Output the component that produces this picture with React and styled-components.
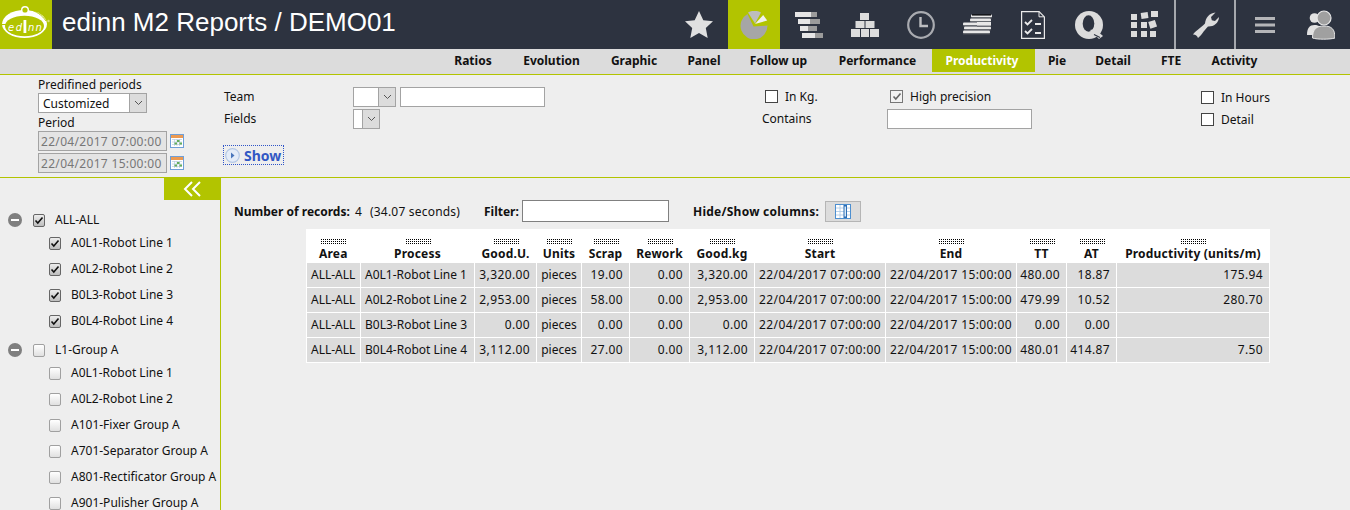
import React from 'react';
import styled, { createGlobalStyle } from 'styled-components';

const Global = createGlobalStyle`
  html, body { margin: 0; height: 100%; overflow: hidden; background: #eeeeee; }
  body { font-family: "Noto Sans", "DejaVu Sans", sans-serif; font-size: 12px; color: #111; }
  #root { height: 510px; }
  * { box-sizing: border-box; }
`;

const Page = styled.div`display: flex; flex-direction: column; height: 510px; overflow: hidden;`;
const Header = styled.header`display: flex; align-items: stretch; height: 49px; background: #2d3340; flex: none;`;
const LogoBox = styled.div`width: 52px; background: #b2c400; flex: none;`;
const Title = styled.h1`margin: 0 0 0 10px; font: 400 26px/45px "Liberation Sans", Arial, sans-serif; color: #fff; flex: 1; white-space: nowrap;`;
const IconBar = styled.div`display: flex; align-items: center; flex: none; padding-right: 15px;`;
const IconCell = styled.div`
  display: flex; align-items: center; justify-content: center; height: 49px; flex: none;
  width: ${p => p.$w}px; margin-left: ${p => p.$gap || 0}px;
  background: ${p => p.$active ? '#b2c400' : 'transparent'};
`;
const Sep = styled.div`width: 2px; height: 49px; background: #a5a8ad; flex: none; margin-left: ${p => p.$gap}px;`;

const Nav = styled.nav`display: flex; padding-left: 437px; height: 26px; background: #dcdcdc; border-bottom: 1px solid #b2c400; flex: none;`;
const NavItem = styled.a`
  display: flex; align-items: center; justify-content: center; height: 23px; width: ${p => p.$w}px; flex: none;
  font-weight: 700; font-size: 12px; color: ${p => p.$active ? '#fff' : '#111'};
  background: ${p => p.$active ? '#b2c400' : 'transparent'};
  padding-right: ${p => p.$active ? 3 : 0}px;
`;

const FilterPanel = styled.section`display: flex; height: 103px; border-bottom: 1px solid #b2c400; flex: none;`;
const PeriodCol = styled.div`width: 186px; margin-left: 38px; padding-top: 2px; flex: none;`;
const FieldLabel = styled.div`height: ${p => p.$h || 16}px; line-height: 15px; margin-top: ${p => p.$mt || 0}px; white-space: nowrap;`;
const Select = styled.div`
  display: flex; justify-content: flex-end; align-items: stretch; background: #fff; border: 1px solid #a3a3a3;
  width: ${p => p.$w}px; height: ${p => p.$h || 20}px; padding-left: 4px; line-height: 19px;
`;
const SelectText = styled.span`flex: 1;`;
const SelectArrow = styled.span`display: flex; align-items: center; justify-content: center; width: 17px; background: #dcdcdc; border-left: 1px solid #a3a3a3;`;
const DateRow = styled.div`display: flex; align-items: center; gap: 3px; height: 21px; margin-top: ${p => p.$mt || 0}px;`;
const DateInput = styled.div`width: 129px; height: 20px; line-height: 19px; padding-left: 2px; letter-spacing: .32px; background: #e4e4e4; border: 1px solid #a3a3a3; color: #777; white-space: nowrap; overflow: hidden;`;
const TeamCol = styled.div`width: 541px; flex: none; padding-top: 11px;`;
const FormRow = styled.div`display: flex; align-items: center; height: 22px; margin-left: ${p => p.$ml || 0}px;`;
const RowLabel = styled.span`width: ${p => p.$w}px; flex: none; padding-bottom: 2px;`;
const TextInput = styled.div`width: ${p => p.$w}px; height: 20px; margin-left: ${p => p.$ml || 0}px; background: #fff; border: 1px solid #a3a3a3; flex: none;`;
const ShowLink = styled.a`
  display: inline-flex; align-items: center; gap: 4px; margin-top: 15px; height: 20px; width: 61px; padding-left: 1px; margin-left: -1px;
  border: 1px dotted #2f55c8; color: #3358c4; font-weight: 700; font-size: 14px; white-space: nowrap;
`;
const OptionsCol = styled.div`width: 436px; flex: none; padding-top: 11px;`;
const Check = styled.span`
  display: inline-flex; align-items: center; justify-content: center; width: 13px; height: 13px; flex: none;
  background: ${p => p.$soft ? '#f2f2f2' : '#fff'}; border: 1px solid ${p => p.$soft ? '#777' : '#444'};
  margin-right: 7px;
`;
const OptionGroup = styled.div`display: flex; align-items: center; width: ${p => p.$w}px; flex: none; padding-bottom: 2px;`;
const HoursCol = styled.div`padding-top: 11px; flex: none;`;
const HoursRow = styled.div`display: flex; align-items: center; height: 22px;`;

const Body = styled.div`display: flex; flex: 1; min-height: 0;`;
const Sidebar = styled.aside`width: 221px; border-right: 1px solid #b2c400; flex: none; overflow: hidden;`;
const Collapse = styled.div`display: flex; align-items: center; justify-content: center; width: 56px; height: 22px; margin-left: 164px; background: #b2c400;`;
const Tree = styled.div`padding-top: 8px;`;
const GroupRow = styled.div`display: flex; align-items: center; height: 22px; padding: 2px 0 0 8px; margin-top: ${p => p.$mt || 0}px;`;
const ChildRow = styled.div`display: flex; align-items: center; height: 26px; padding-left: 49px;`;
const Minus = styled.span`display: flex; align-items: center; justify-content: center; width: 14px; height: 14px; border-radius: 50%; background: #7f7f7f; margin-right: 11px; flex: none;
  &::before { content: ''; width: 8px; height: 2px; background: #fff; }`;
const TreeCheck = styled.span`
  display: inline-flex; align-items: center; justify-content: center; width: 12px; height: 13px; flex: none; margin-right: 10px;
  border: 1px solid ${p => p.$on ? '#666' : '#a0a0a0'}; border-radius: 2px;
  background: ${p => p.$on ? 'linear-gradient(#ededed,#bdbdbd)' : 'linear-gradient(#fff,#e0e0e0)'};
`;
const TreeText = styled.span`white-space: nowrap; line-height: 14px;`;

const Main = styled.main`flex: 1; min-width: 0;`;
const Toolbar = styled.div`display: flex; align-items: center; height: 51px; padding: 15px 0 0 13px;`;
const Strong = styled.span`font-weight: 700; white-space: nowrap; width: ${p => p.$w}px; flex: none; letter-spacing: ${p => p.$ls || 0}px;`;
const Plain = styled.span`white-space: nowrap; width: ${p => p.$w}px; flex: none; letter-spacing: ${p => p.$ls || 0}px;`;
const FilterInput = styled.div`width: 147px; height: 22px; margin: 0 24px 0 4px; background: #fff; border: 1px solid #808080; flex: none;`;
const ColumnsButton = styled.div`display: flex; align-items: center; justify-content: center; width: 36px; height: 21px; margin-left: 5px; background: #dcdcdc; border: 1px solid #b5b5b5;`;

const Table = styled.table`border-collapse: collapse; table-layout: fixed; width: 963px; margin-left: 85px; background: #fff;`;
const Th = styled.th`
  height: 33px; padding: 10px 0 0; font-weight: 700; font-size: 12px; letter-spacing: .2px; text-align: center; vertical-align: top; line-height: 15px; white-space: nowrap;
  border-right: 1px solid #fff;
`;
const Grip = styled.div`
  width: 26px; height: 5px; margin: 0 auto 2px;
  background-image: conic-gradient(#000 25%, transparent 0);
  background-size: 2px 2px;
`;
const Td = styled.td`
  height: 25px; background: #dcdcdc; border: 1px solid #fff; white-space: nowrap; overflow: hidden;
  text-align: ${p => p.$align};
  padding: ${p => p.$align === 'center' ? '0' : p.$align === 'right' ? '0 6px 0 0' : '0 0 0 4px'};
  letter-spacing: ${p => p.$num ? '.38px' : '0'};
`;

const Chevron = () => (
  <svg width="9" height="6" viewBox="0 0 9 6"><path d="M1 1l3.5 3.5L8 1" fill="none" stroke="#555" strokeWidth="1" /></svg>
);
const Logo = () => (
  <svg width="52" height="49" viewBox="0 0 52 49">
    <ellipse cx="24.500" cy="24" rx="22.500" ry="14" fill="#fff" />
    <ellipse cx="24.500" cy="26" rx="19.500" ry="10.300" fill="#b2c400" />
    <path d="M29 9.500C36 11 42 15 46 21" fill="none" stroke="#b2c400" strokeWidth=".9" />
    <path d="M0 24.500h7" stroke="#b2c400" strokeWidth="1" />
    <circle cx="25" cy="10" r="3.300" fill="#b2c400" stroke="#fff" strokeWidth="1.400" />
    <text x="8" y="31" fontFamily="DejaVu Sans" fontStyle="italic" fontSize="10" letterSpacing="1.500" fill="#fff">ed</text>
    <rect x="23.500" y="20" width="2.800" height="13" fill="#fff" />
    <text x="28" y="31" fontFamily="DejaVu Sans" fontStyle="italic" fontSize="10" letterSpacing="1.200" fill="#fff">nn</text>
    <circle cx="48.500" cy="21" r="1.200" fill="#d7e07a" />
  </svg>
);
const Star = () => (
  <svg width="28" height="27" viewBox="0 0 28 27"><path d="M14 0l4.300 9.200L28 10.300l-7.200 6.800L22.700 27 14 22l-8.700 5 1.900-9.900L0 10.300l9.700-1.100z" fill="#e0e0e0" /></svg>
);
const Pie = () => (
  <svg width="28" height="28" viewBox="0 0 28 28">
    <path d="M7.500 3A13.500 13.500 0 1 0 27.500 14.500L13.500 15.500z" fill="#a6a6a6" />
    <path d="M8 1.500A14 14 0 0 1 21 1.500L15 12.500z" fill="#bdbdbd" />
    <path d="M15 13l8.200-9 4 5.600z" fill="#f1f1f1" />
  </svg>
);
const Gantt = () => (
  <svg width="28" height="26" viewBox="0 0 28 26">
    <rect x="0" y="0" width="16" height="5" fill="#e6e6e6" /><rect x="16" y="0" width="6" height="5" fill="#9b9b9b" />
    <rect x="3" y="7" width="12" height="5" fill="#e6e6e6" /><rect x="15" y="7" width="10" height="5" fill="#9b9b9b" />
    <rect x="5" y="14" width="8" height="5" fill="#e6e6e6" /><rect x="13" y="14" width="9" height="5" fill="#9b9b9b" />
    <rect x="7" y="21" width="13" height="5" fill="#e6e6e6" /><rect x="20" y="21" width="8" height="5" fill="#9b9b9b" />
  </svg>
);
const Bricks = () => (
  <svg width="28" height="24" viewBox="0 0 28 24" fill="#dcdcdc">
    <rect x="9" y="0" width="9" height="7" /><rect x="4.500" y="8" width="9" height="7" /><rect x="14.500" y="8" width="9" height="7" />
    <rect x="0" y="16" width="9" height="8" /><rect x="10" y="16" width="8" height="8" /><rect x="19" y="16" width="9" height="8" />
  </svg>
);
const Clock = () => (
  <svg width="28" height="28" viewBox="0 0 28 28"><circle cx="14" cy="14" r="12.800" fill="none" stroke="#a9abb0" strokeWidth="2.200" /><path d="M13.500 6v9H21" fill="none" stroke="#bcbdc0" strokeWidth="2.400" /></svg>
);
const Coins = () => (
  <svg width="29" height="21" viewBox="0 0 29 21">
    {[[8, 0], [7, 4], [0, 8], [1, 12], [0, 16]].map(([x, y], i) => (
      <g key={i}><rect x={x} y={y + 0.5} width={i < 2 ? 21 : 27} height="3" rx="1" fill="#e8e8e8" /><rect x={x} y={y + 3.4} width={i < 2 ? 21 : 27} height="1" fill="#55585f" /></g>
    ))}
    <rect x="9" y="0" width="19" height="1.600" fill="#15171c" />
    <rect x="14" y="8" width="14" height="4" fill="#e8e8e8" /><rect x="14" y="11.600" width="14" height="1" fill="#55585f" />
  </svg>
);
const Checklist = () => (
  <svg width="24" height="28" viewBox="0 0 24 28" fill="none" stroke="#eaeaea">
    <path d="M.6.6h17.500l5.300 5.300v21.500H.6z" strokeWidth="1.200" /><path d="M18 .8v5h5" strokeWidth="1" />
    <path d="M4 11l2.500 2.500L11 9M4 20l2.500 2.500L11 18" strokeWidth="1.800" /><path d="M14 13h6M14 22h6" strokeWidth="1.800" />
  </svg>
);
const QIcon = () => (
  <svg width="28" height="28" viewBox="0 0 28 28">
    <circle cx="14" cy="14" r="14" fill="#dcdcdc" />
    <ellipse cx="13.500" cy="12.500" rx="5.800" ry="8.300" fill="#2d3340" />
    <path d="M15 19l5-1 8 7-4 3z" fill="#dcdcdc" />
    <path d="M19 23.500l6 3" stroke="#2d3340" strokeWidth="1.200" />
  </svg>
);
const GridIcon = () => (
  <svg width="27" height="27" viewBox="0 0 27 27" fill="#dcdcdc">
    <rect x="0" y="3" width="6" height="6" /><rect x="10" y="1.500" width="7" height="6" transform="rotate(-8 13 4)" /><rect x="20" y="0" width="7" height="6" />
    <rect x="0" y="11" width="6" height="6" /><rect x="10" y="11" width="6" height="6" /><rect x="18" y="10" width="7" height="7" transform="rotate(-18 21 13)" />
    <rect x="0" y="20" width="6" height="6" /><rect x="10" y="20" width="6" height="6" /><rect x="19" y="20" width="6" height="6" />
  </svg>
);
const Wrench = () => (
  <svg width="27" height="26" viewBox="0 0 27 26">
    <path d="M1 22.500C2.500 20 8.500 16 13 11.500 13.500 6 17 1 23.500 .5L19 5l.8 3.200 3.200.8L27 5c-.2 6.500-5.800 9.800-11 9.500C11.500 19 9 24 6 26 5 24 4 22.500 1 22.500z" fill="#dcdcdc" />
  </svg>
);
const MenuIcon = () => (
  <svg width="20" height="16" viewBox="0 0 20 16" fill="#b4b5b8"><rect width="20" height="3" /><rect y="6.500" width="20" height="3" /><rect y="13" width="20" height="3" /></svg>
);
const Users = () => (
  <svg width="28" height="30" viewBox="0 0 28 30">
    <circle cx="7.500" cy="8" r="4.800" fill="#e2e2e2" /><path d="M0 25c0-7 2.500-10 7.500-10s7 2 7 10z" fill="#e2e2e2" />
    <circle cx="17" cy="8" r="7" fill="#a0a0a0" stroke="#e8e8e8" strokeWidth="1.200" />
    <path d="M5.500 28c0-9 4-12 11.500-12s11 3 11 12c-5 1.600-18 1.600-22.500 0z" fill="#a0a0a0" stroke="#e8e8e8" strokeWidth="1" />
  </svg>
);
const Calendar = () => (
  <svg width="14" height="14" viewBox="0 0 14 14">
    <rect x=".5" y=".5" width="13" height="13" fill="#fff" stroke="#6f9fd8" />
    <rect x="1" y="1" width="12" height="3" fill="#ec9a52" />
    <path d="M2 5.500h10M2 8h10M2 10.500h10M4.500 5v7M7 5v7M9.500 5v7" stroke="#b9cbe0" strokeWidth=".7" />
    <rect x="7" y="6" width="2.500" height="2" fill="#62ad5a" /><rect x="4.500" y="8.500" width="2.500" height="2" fill="#62ad5a" /><rect x="9.500" y="8.500" width="2.500" height="2" fill="#62ad5a" />
  </svg>
);
const ShowIcon = () => (
  <svg width="15" height="15" viewBox="0 0 15 15">
    <circle cx="7.500" cy="7.500" r="6.800" fill="#e4ecf8" stroke="#b4c8e6" strokeWidth="1.200" />
    <path d="M6 4.500l3.500 3L6 10.500z" fill="#4a76bb" />
  </svg>
);
const Tick = ({ color = '#111' }) => (
  <svg width="10" height="9" viewBox="0 0 10 9"><path d="M1.500 4.500l2.300 2.500L8.500 1.500" fill="none" stroke={color} strokeWidth="1.600" /></svg>
);
const DoubleChevron = () => (
  <svg width="18" height="16" viewBox="0 0 18 16" fill="none" stroke="#fff" strokeWidth="2"><path d="M9 1L2 8l7 7M17 1l-7 7 7 7" /></svg>
);
const ColumnsIcon = () => (
  <svg width="16" height="15" viewBox="0 0 16 15">
    <rect x=".5" y=".5" width="15" height="14" fill="#fff" stroke="#4d8fd0" />
    <path d="M1 4h14M1 7.500h14M1 11h14M5 1v13" stroke="#a7c6e6" strokeWidth=".8" />
    <rect x="8.500" y="1" width="3.500" height="13" fill="#2d6eb5" /><rect x="9.500" y="2.500" width="1.500" height="10" fill="#d8e8f6" />
  </svg>
);

const headIcons = [
  { C: Star, gap: 0, w: 28 },
  { C: Pie, gap: 15, w: 52, active: true },
  { C: Gantt, gap: 15, w: 28 },
  { C: Bricks, gap: 28, w: 28 },
  { C: Clock, gap: 28, w: 28 },
  { C: Coins, gap: 28, w: 29 },
  { C: Checklist, gap: 29, w: 24 },
  { C: QIcon, gap: 30, w: 28 },
  { C: GridIcon, gap: 28, w: 27 },
];
const navItems = [
  ['Ratios', 72], ['Evolution', 85], ['Graphic', 80], ['Panel', 60], ['Follow up', 89], ['Performance', 109],
  ['Productivity', 103, true], ['Pie', 44], ['Detail', 68], ['FTE', 48], ['Activity', 79],
];
const cols = [54, 114, 62, 45, 48, 60, 65, 131, 131, 50, 50, 153];
const heads = ['Area', 'Process', 'Good.U.', 'Units', 'Scrap', 'Rework', 'Good.kg', 'Start', 'End', 'TT', 'AT', 'Productivity (units/m)'];
const S = '22/04/2017 07:00:00', E = '22/04/2017 15:00:00';
const rows = [
  ['ALL-ALL', 'A0L1-Robot Line 1', '3,320.00', 'pieces', '19.00', '0.00', '3,320.00', S, E, '480.00', '18.87', '175.94'],
  ['ALL-ALL', 'A0L2-Robot Line 2', '2,953.00', 'pieces', '58.00', '0.00', '2,953.00', S, E, '479.99', '10.52', '280.70'],
  ['ALL-ALL', 'B0L3-Robot Line 3', '0.00', 'pieces', '0.00', '0.00', '0.00', S, E, '0.00', '0.00', ''],
  ['ALL-ALL', 'B0L4-Robot Line 4', '3,112.00', 'pieces', '27.00', '0.00', '3,112.00', S, E, '480.01', '414.87', '7.50'],
];
const alignOf = i => (i < 2 ? 'left' : i === 3 || i === 7 || i === 8 ? 'center' : 'right');
const isNum = i => i > 1 && i !== 3;
const allLines = ['A0L1-Robot Line 1', 'A0L2-Robot Line 2', 'B0L3-Robot Line 3', 'B0L4-Robot Line 4'];
const groupA = ['A0L1-Robot Line 1', 'A0L2-Robot Line 2', 'A101-Fixer Group A', 'A701-Separator Group A', 'A801-Rectificator Group A', 'A901-Pulisher Group A'];

export default function App() {
  return (
    <Page>
      <Global />
      <Header>
        <LogoBox><Logo /></LogoBox>
        <Title>edinn M2 Reports / DEMO01</Title>
        <IconBar>
          {headIcons.map(({ C, gap, w, active }, i) => (
            <IconCell key={i} $w={w} $gap={gap} $active={active}><C /></IconCell>
          ))}
          <Sep $gap={16} />
          <IconCell $w={27} $gap={16}><Wrench /></IconCell>
          <Sep $gap={15} />
          <IconCell $w={20} $gap={19}><MenuIcon /></IconCell>
          <IconCell $w={28} $gap={32}><Users /></IconCell>
        </IconBar>
      </Header>
      <Nav>
        {navItems.map(([t, w, a]) => <NavItem key={t} $w={w} $active={a}>{t}</NavItem>)}
      </Nav>
      <FilterPanel>
        <PeriodCol>
          <FieldLabel>Predifined periods</FieldLabel>
          <Select $w={109}><SelectText>Customized</SelectText><SelectArrow><Chevron /></SelectArrow></Select>
          <FieldLabel $mt={2} $h={15}>Period</FieldLabel>
          <DateRow><DateInput>{S}</DateInput><Calendar /></DateRow>
          <DateRow $mt={1}><DateInput>{E}</DateInput><Calendar /></DateRow>
        </PeriodCol>
        <TeamCol>
          <FormRow>
            <RowLabel $w={129}>Team</RowLabel>
            <Select $w={43}><SelectArrow><Chevron /></SelectArrow></Select>
            <TextInput $w={145} $ml={4} />
          </FormRow>
          <FormRow>
            <RowLabel $w={129}>Fields</RowLabel>
            <Select $w={27}><SelectArrow><Chevron /></SelectArrow></Select>
          </FormRow>
          <ShowLink><ShowIcon />Show</ShowLink>
        </TeamCol>
        <OptionsCol>
          <FormRow>
            <OptionGroup $w={125}><Check />In Kg.</OptionGroup>
            <OptionGroup $w={200}><Check $soft><Tick color="#666" /></Check>High precision</OptionGroup>
          </FormRow>
          <FormRow $ml={-3}>
            <RowLabel $w={125}>Contains</RowLabel>
            <TextInput $w={145} />
          </FormRow>
        </OptionsCol>
        <HoursCol>
          <HoursRow><Check />In Hours</HoursRow>
          <HoursRow><Check />Detail</HoursRow>
        </HoursCol>
      </FilterPanel>
      <Body>
        <Sidebar>
          <Collapse><DoubleChevron /></Collapse>
          <Tree>
            <GroupRow><Minus /><TreeCheck $on><Tick /></TreeCheck><TreeText>ALL-ALL</TreeText></GroupRow>
            {allLines.map(t => <ChildRow key={t}><TreeCheck $on><Tick /></TreeCheck><TreeText>{t}</TreeText></ChildRow>)}
            <GroupRow $mt={4}><Minus /><TreeCheck /><TreeText>L1-Group A</TreeText></GroupRow>
            {groupA.map(t => <ChildRow key={t}><TreeCheck /><TreeText>{t}</TreeText></ChildRow>)}
          </Tree>
        </Sidebar>
        <Main>
          <Toolbar>
            <Strong $w={121}>Number of records:</Strong><Plain $w={15}>4</Plain><Plain $w={114} $ls={0.2}>(34.07 seconds)</Plain>
            <Strong $w={34}>Filter:</Strong>
            <FilterInput />
            <Strong $w={127} $ls={0.25}>Hide/Show columns:</Strong>
            <ColumnsButton><ColumnsIcon /></ColumnsButton>
          </Toolbar>
          <Table>
            <colgroup>{cols.map((w, i) => <col key={i} style={{ width: w }} />)}</colgroup>
            <thead>
              <tr>{heads.map(h => <Th key={h}><Grip />{h}</Th>)}</tr>
            </thead>
            <tbody>
              {rows.map((r, i) => (
                <tr key={i}>{r.map((c, j) => <Td key={j} $align={alignOf(j)} $num={isNum(j)}>{c}</Td>)}</tr>
              ))}
            </tbody>
          </Table>
        </Main>
      </Body>
    </Page>
  );
}
